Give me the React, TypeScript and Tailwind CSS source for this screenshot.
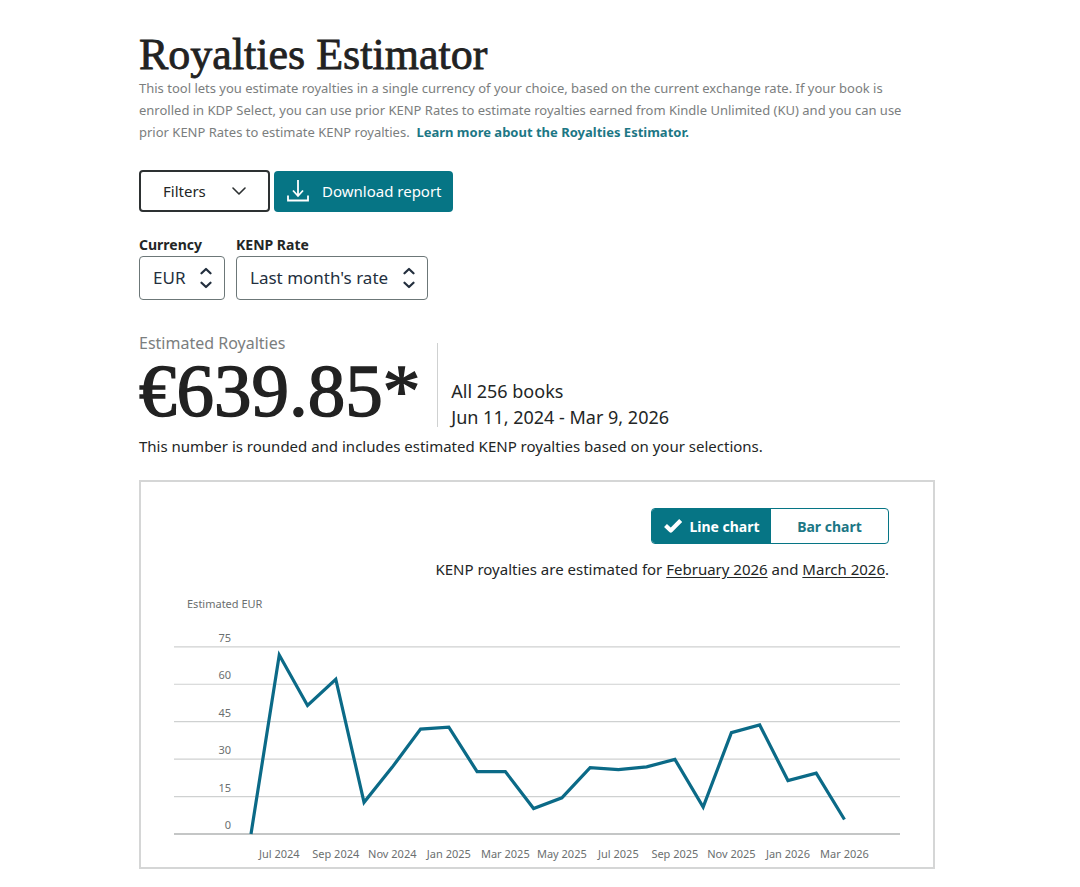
import { useState } from "react";

const MONTHLY = [
  0, 71.7, 51.5, 62, 12.7, 26.8, 42, 42.8, 25, 25, 10.2, 14.5, 26.6, 25.8, 26.9,
  29.9, 10.8, 40.6, 43.7, 21.4, 24.4, 5.8,
];
const MONTH_LABELS = [
  "Jul 2024", "Sep 2024", "Nov 2024", "Jan 2025", "Mar 2025", "May 2025",
  "Jul 2025", "Sep 2025", "Nov 2025", "Jan 2026", "Mar 2026",
];
const TICKS = [75, 60, 45, 30, 15, 0];

const STEP = 28.26;
const xAt = (i: number) => 110 + i * STEP;
const yAt = (v: number) => 244 - v * 2.496;

function Chart({ kind }: { kind: "line" | "bar" }) {
  return (
    <svg viewBox="0 0 792 277" className="block w-full" role="img" aria-label="Estimated royalties by month">
      <g fill="#6b6f70" fontSize="11">
        <text x="46" y="18">Estimated EUR</text>
        {TICKS.map((t) => (
          <text key={t} x="90" y={Math.round(yAt(t)) - 5} textAnchor="end">{t}</text>
        ))}
        {MONTH_LABELS.map((m, i) => (
          <text key={m} x={xAt(i * 2 + 1)} y="268" textAnchor="middle">{m}</text>
        ))}
      </g>
      {TICKS.map((t) => (
        <line key={t} x1="33" x2="759" y1={yAt(t)} y2={yAt(t)} stroke={t ? "#cfd1d1" : "#c4c6c6"} strokeWidth={t ? 1.2 : 1.8} />
      ))}
      {kind === "line" ? (
        <polyline
          points={MONTHLY.map((v, i) => `${xAt(i)},${yAt(v)}`).join(" ")}
          fill="none"
          stroke="#0b6a87"
          strokeWidth="3.2"
        />
      ) : (
        MONTHLY.map((v, i) => (
          <rect key={i} x={xAt(i) - 9} y={yAt(v)} width="18" height={244 - yAt(v)} fill="#0b6a87" />
        ))
      )}
    </svg>
  );
}

function Picker({ id, label, options }: { id: string; label: string; options: string[] }) {
  return (
    <div className="flex flex-col">
      <label htmlFor={id} className="text-[14px] leading-[22px] font-bold">{label}</label>
      <div className="relative">
        <select
          id={id}
          className="h-11 appearance-none rounded border border-[#6c7778] bg-white pr-[38px] pl-[13px] text-[17px] text-[#232f3e]"
        >
          {options.map((o) => (
            <option key={o}>{o}</option>
          ))}
        </select>
        <svg viewBox="0 0 12 22" className="pointer-events-none absolute top-[11px] right-[13px] h-[22px] w-3" fill="none" stroke="#232f3e" strokeWidth="2.2" strokeLinecap="round" strokeLinejoin="round">
          <path d="M1.5 6.3 6 2l4.500 4.300M1.500 15.700 6 20l4.500-4.300" />
        </svg>
      </div>
    </div>
  );
}

export default function App() {
  const [kind, setKind] = useState<"line" | "bar">("line");
  return (
    <main className="pt-8 pr-[145px] pb-4 pl-[139px] font-['Noto_Sans','Open_Sans',sans-serif] text-[#232626]">
      <h1 className="font-['Liberation_Serif',serif] text-[44px] leading-[45px] text-[#222] [-webkit-text-stroke:0.8px_#222]">Royalties Estimator</h1>
      <p className="pr-2 text-[13px] leading-[22px] text-[#7b7e7e]">
        This tool lets you estimate royalties in a single currency of your choice, based on the current exchange rate. If your book is
        enrolled in KDP Select, you can use prior KENP Rates to estimate royalties earned from Kindle Unlimited (KU) and you can use
        prior KENP Rates to estimate KENP royalties.&nbsp;{" "}
        <a href="#learn" className="font-bold text-[#1c7785]">Learn more about the Royalties Estimator.</a>
      </p>

      <div className="mt-[27px] flex items-center gap-1">
        <button type="button" className="flex h-[42px] w-[131px] items-center justify-between rounded border-2 border-[#2d3132] px-[22px] text-[15px]">
          Filters
          <svg viewBox="0 0 14 8" className="h-2 w-3.5" fill="none" stroke="#2d3132" strokeWidth="1.6" strokeLinecap="round" strokeLinejoin="round">
            <path d="m1 1 6 6 6-6" />
          </svg>
        </button>
        <button type="button" className="flex h-[41px] items-center gap-[13px] rounded bg-[#067585] pr-[11px] pl-[13px] text-[15px] text-white">
          <svg viewBox="0 0 22 22" className="size-[22px]" fill="none" stroke="white" strokeWidth="1.8">
            <path d="M11 0v15.500M6 10.500l5 5.500 5-5.500M1 15.500V20.500h20v-5" />
          </svg>
          Download report
        </button>
      </div>

      <div className="mt-[22px] flex gap-[11px]">
        <Picker id="currency" label="Currency" options={["EUR"]} />
        <Picker id="rate" label="KENP Rate" options={["Last month's rate"]} />
      </div>

      <section className="mt-[32px]">
        <div className="flex">
          <div className="pr-[17px]">
            <h2 className="text-[16px] leading-[22px] text-[#7b7e7e]">Estimated Royalties</h2>
            <p className="font-['Liberation_Serif',serif] text-[75px] leading-[73px] text-[#222] [-webkit-text-stroke:1.5px_#222]">€639.85*</p>
          </div>
          <div className="mt-[11px] flex flex-col justify-end gap-1.5 border-l border-[#cfd1d1] pl-[13px] text-[18px] leading-5">
            <p>All 256 books</p>
            <p>Jun 11, 2024 - Mar 9, 2026</p>
          </div>
        </div>
        <p className="mt-2 text-[15px] leading-[22px]">
          This number is rounded and includes estimated KENP royalties based on your selections.
        </p>
      </section>

      <section className="mt-[23px] border-2 border-[#d5d6d6]">
        <div className="flex flex-col items-end pt-[26px] pr-11">
          <div className="flex h-9 overflow-hidden rounded border border-[#067585] text-[14px] font-bold">
            <button
              type="button"
              aria-pressed={kind === "line"}
              onClick={() => setKind("line")}
              className={`flex w-[119px] items-center justify-center gap-1.5 ${kind === "line" ? "bg-[#067585] text-white" : "text-[#1c7785]"}`}
            >
              {kind === "line" && <Check />}
              Line chart
            </button>
            <button
              type="button"
              aria-pressed={kind === "bar"}
              onClick={() => setKind("bar")}
              className={`flex w-[117px] items-center justify-center gap-1.5 ${kind === "bar" ? "bg-[#067585] text-white" : "text-[#1c7785]"}`}
            >
              {kind === "bar" && <Check />}
              Bar chart
            </button>
          </div>
          <p className="mt-[14px] mb-[10px] text-[15px] leading-[22px]">
            KENP royalties are estimated for <a href="#feb" className="underline underline-offset-2">February 2026</a> and{" "}
            <a href="#mar" className="underline underline-offset-2">March 2026</a>.
          </p>
        </div>
        <Chart kind={kind} />
      </section>
    </main>
  );
}

function Check() {
  return (
    <svg viewBox="0 0 20 16" className="h-4 w-5" fill="none" stroke="currentColor" strokeWidth="4.2" strokeLinejoin="round">
      <path d="M2.500 7.500 7.800 12.600 17.700 2.600" />
    </svg>
  );
}
